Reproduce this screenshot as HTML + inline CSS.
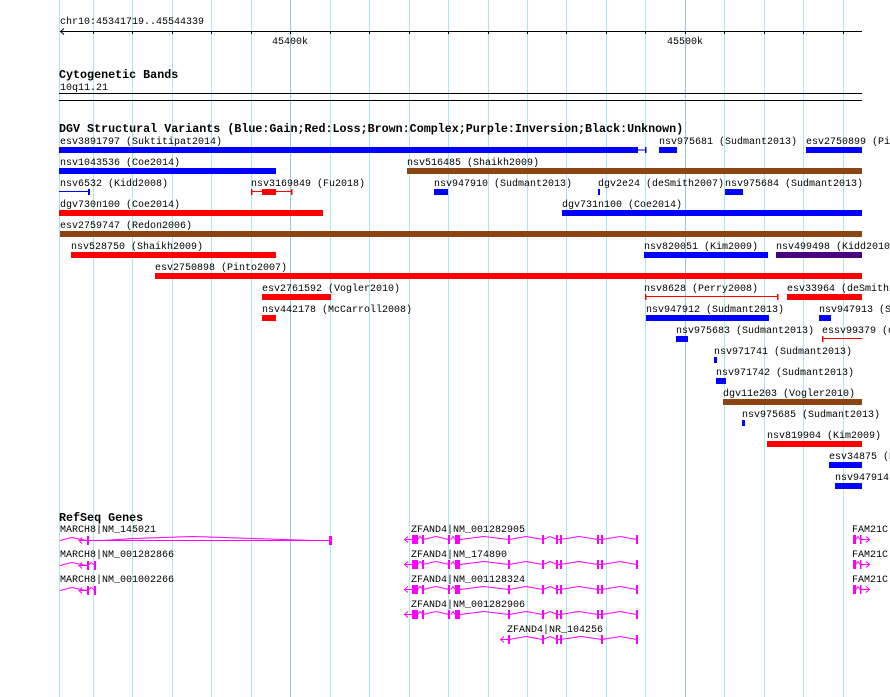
<!DOCTYPE html>
<html><head><meta charset="utf-8"><style>
html,body{margin:0;padding:0;background:#fff;width:890px;height:697px;overflow:hidden}
svg{display:block}
text{font-family:"Liberation Mono",monospace;font-size:10px;fill:#000}
.h{font-weight:bold;font-size:11.7px}
</style></head><body>
<svg width="890" height="697" xmlns="http://www.w3.org/2000/svg">
<g stroke="#a8e6f0" stroke-width="1">
<line x1="59.5" y1="0" x2="59.5" y2="697"/>
<line x1="93.5" y1="0" x2="93.5" y2="697"/>
<line x1="132.5" y1="0" x2="132.5" y2="697"/>
<line x1="172.5" y1="0" x2="172.5" y2="697"/>
<line x1="211.5" y1="0" x2="211.5" y2="697"/>
<line x1="251.5" y1="0" x2="251.5" y2="697"/>
<line x1="330.5" y1="0" x2="330.5" y2="697"/>
<line x1="369.5" y1="0" x2="369.5" y2="697"/>
<line x1="409.5" y1="0" x2="409.5" y2="697"/>
<line x1="448.5" y1="0" x2="448.5" y2="697"/>
<line x1="488.5" y1="0" x2="488.5" y2="697"/>
<line x1="527.5" y1="0" x2="527.5" y2="697"/>
<line x1="566.5" y1="0" x2="566.5" y2="697"/>
<line x1="606.5" y1="0" x2="606.5" y2="697"/>
<line x1="645.5" y1="0" x2="645.5" y2="697"/>
<line x1="724.5" y1="0" x2="724.5" y2="697"/>
<line x1="764.5" y1="0" x2="764.5" y2="697"/>
<line x1="803.5" y1="0" x2="803.5" y2="697"/>
<line x1="843.5" y1="0" x2="843.5" y2="697"/>
</g>
<g stroke="#8cc8e8"><line x1="290.5" y1="0" x2="290.5" y2="697"/><line x1="685.5" y1="0" x2="685.5" y2="697"/></g>

<text x="60" y="24">chr10:45341719..45544339</text>
<g stroke="#000"><line x1="60" y1="31.5" x2="862" y2="31.5"/>
<polyline points="64,28.5 60.5,31.5 64,34.5" fill="none"/>
<path d="M93.5 31v3M132.5 31v3M172.5 31v3M211.5 31v3M251.5 31v3M290.5 31v3M330.5 31v3M369.5 31v3M409.5 31v3M448.5 31v3M488.5 31v3M527.5 31v3M566.5 31v3M606.5 31v3M645.5 31v3M685.5 31v3M724.5 31v3M764.5 31v3M803.5 31v3M843.5 31v3"/></g>
<text x="272" y="44">45400k</text><text x="667" y="44">45500k</text>

<text class="h" x="59" y="78">Cytogenetic Bands</text>
<text x="60" y="90">10q11.21</text>
<rect x="59" y="93" width="803" height="1" fill="#000"/>
<rect x="59" y="100" width="803" height="1" fill="#000"/>

<text class="h" x="59" y="132">DGV Structural Variants (Blue:Gain;Red:Loss;Brown:Complex;Purple:Inversion;Black:Unknown)</text>

<text x="60" y="144">esv3891797 (Suktitipat2014)</text>
<rect x="59" y="147" width="579" height="6" fill="#00f"/><rect x="638" y="149.5" width="8" height="1" fill="#00f"/><rect x="645" y="147" width="1.5" height="6" fill="#00f"/>
<text x="659" y="144">nsv975681 (Sudmant2013)</text><rect x="659" y="147" width="18" height="6" fill="#00f"/>
<text x="806" y="144">esv2750899 (Pi</text><rect x="806" y="147" width="56" height="6" fill="#00f"/>
<text x="60" y="165">nsv1043536 (Coe2014)</text><rect x="59" y="168" width="217" height="6" fill="#00f"/>
<text x="407" y="165">nsv516485 (Shaikh2009)</text><rect x="407" y="168" width="455" height="6" fill="#8b4513"/>
<text x="60" y="186">nsv6532 (Kidd2008)</text><rect x="59" y="191" width="30" height="1" fill="#00f"/><rect x="88" y="189" width="2" height="6" fill="#00f"/>
<text x="251" y="186">nsv3169849 (Fu2018)</text><rect x="251" y="191" width="41" height="1" fill="#f00"/><rect x="251" y="189" width="1.5" height="6" fill="#f00"/><rect x="291" y="189" width="1.5" height="6" fill="#f00"/><rect x="262" y="189" width="14" height="6" fill="#f00"/>
<text x="434" y="186">nsv947910 (Sudmant2013)</text><rect x="434" y="189" width="14" height="6" fill="#00f"/>
<text x="598" y="186">dgv2e24 (deSmith2007)</text><rect x="598" y="189" width="2" height="6" fill="#00f"/>
<text x="725" y="186">nsv975684 (Sudmant2013)</text><rect x="725" y="189" width="18" height="6" fill="#00f"/>
<text x="60" y="207">dgv730n100 (Coe2014)</text><rect x="59" y="210" width="264" height="6" fill="#f00"/>
<text x="562" y="207">dgv731n100 (Coe2014)</text><rect x="562" y="210" width="300" height="6" fill="#00f"/>
<text x="60" y="228">esv2759747 (Redon2006)</text><rect x="60" y="231" width="802" height="6" fill="#8b4513"/>
<text x="71" y="249">nsv528750 (Shaikh2009)</text><rect x="71" y="252" width="205" height="6" fill="#f00"/>
<text x="644" y="249">nsv820051 (Kim2009)</text><rect x="644" y="252" width="124" height="6" fill="#00f"/>
<text x="776" y="249">nsv499498 (Kidd2010</text><rect x="776" y="252" width="86" height="6" fill="#4b0082"/>
<text x="155" y="270">esv2750898 (Pinto2007)</text><rect x="155" y="273" width="707" height="6" fill="#f00"/>
<text x="262" y="291">esv2761592 (Vogler2010)</text><rect x="262" y="294" width="69" height="6" fill="#f00"/>
<text x="644" y="291">nsv8628 (Perry2008)</text><rect x="646" y="296" width="132" height="1" fill="#f00"/><rect x="645" y="294" width="1.5" height="6" fill="#f00"/><rect x="777" y="294" width="1.5" height="6" fill="#f00"/>
<text x="787" y="291">esv33964 (deSmith2</text><rect x="787" y="294" width="75" height="6" fill="#f00"/>
<text x="262" y="312">nsv442178 (McCarroll2008)</text><rect x="262" y="315" width="14" height="6" fill="#f00"/>
<text x="646" y="312">nsv947912 (Sudmant2013)</text><rect x="646" y="315" width="123" height="6" fill="#00f"/>
<text x="819" y="312">nsv947913 (S</text><rect x="819" y="315" width="12" height="6" fill="#00f"/>
<text x="676" y="333">nsv975683 (Sudmant2013)</text><rect x="676" y="336" width="12" height="6" fill="#00f"/>
<text x="822" y="333">essv99379 (d</text><rect x="823" y="338" width="39" height="1" fill="#f00"/><rect x="822" y="336" width="1.5" height="6" fill="#f00"/>
<text x="714" y="354">nsv971741 (Sudmant2013)</text><rect x="714" y="357" width="3" height="6" fill="#00f"/>
<text x="716" y="375">nsv971742 (Sudmant2013)</text><rect x="716" y="378" width="10" height="6" fill="#00f"/>
<text x="723" y="396">dgv11e203 (Vogler2010)</text><rect x="723" y="399" width="139" height="6" fill="#8b4513"/>
<text x="742" y="417">nsv975685 (Sudmant2013)</text><rect x="742" y="420" width="3" height="6" fill="#00f"/>
<text x="767" y="438">nsv819904 (Kim2009)</text><rect x="767" y="441" width="95" height="6" fill="#f00"/>
<text x="829" y="459">esv34875 (D</text><rect x="829" y="462" width="33" height="6" fill="#00f"/>
<text x="835" y="480">nsv947914</text><rect x="835" y="483" width="27" height="6" fill="#00f"/>

<text class="h" x="59" y="521">RefSeq Genes</text>

<g fill="none" stroke="#f0f" stroke-width="1">
<text x="60" y="532" style="fill:#000;stroke:none">MARCH8|NM_145021</text>
<path d="M60 540.5L72 537.5L86 540.5M82 537.5L79 540.5L82 543.5M79 540.5H330M103 540.5L133 538.5L163 537.5L193 536.5L223 537.5L253 538.5L283 539.5L313 540.5"/>
<text x="60" y="557" style="fill:#000;stroke:none">MARCH8|NM_001282866</text>
<path d="M60 565.5L72 562.5L86 565.5M82 562.5L79 565.5L82 568.5M79 565.5H88M88 565.5L91 562.5L95 565.5"/>
<text x="60" y="582" style="fill:#000;stroke:none">MARCH8|NM_001002266</text>
<path d="M60 590.5L72 587.5L86 590.5M82 587.5L79 590.5L82 593.5M79 590.5H88M88 590.5L91 587.5L95 590.5"/>
</g>
<g fill="#f0f">
<rect x="87" y="536" width="2" height="9"/><rect x="329" y="536" width="3" height="9"/>
<rect x="87" y="561" width="2" height="9"/><rect x="94" y="561" width="2" height="9"/>
<rect x="87" y="586" width="2" height="9"/><rect x="94" y="586" width="2" height="9"/>
</g>

<g style="fill:#000">
<text x="411" y="532">ZFAND4|NM_001282905</text>
<text x="411" y="557">ZFAND4|NM_174890</text>
<text x="411" y="582">ZFAND4|NM_001128324</text>
<text x="411" y="607">ZFAND4|NM_001282906</text>
<text x="507" y="632">ZFAND4|NR_104256</text>
</g>
<g id="z1">
<path fill="none" stroke="#f0f" d="M404 539.5H412M408 536.5L404.5 539.5L408 542.5M418 539.5L420 536.5L423 539.5M423 539.5L436 536.5L449 539.5M451 539.5L453 536.5L455 539.5M460 539.5L484 536.5L509 539.5M509 539.5L526 536.5L543 539.5M543 539.5L550 536.5L557 539.5M557 539.5H560M560 539.5L579 536.5L598 539.5M598 539.5H602M602 539.5L620 536.5L637 539.5"/>
<g fill="#f0f"><rect x="412" y="535" width="6" height="9"/><rect x="422" y="535" width="2" height="9"/><rect x="448" y="535" width="2" height="9"/><rect x="455" y="535" width="5" height="9"/><rect x="508" y="535" width="2" height="9"/><rect x="542" y="535" width="2" height="9"/><rect x="556" y="535" width="2" height="9"/><rect x="560" y="535" width="2" height="9"/><rect x="597" y="535" width="2" height="9"/><rect x="601" y="535" width="2" height="9"/><rect x="636" y="535" width="2" height="9"/></g>
</g>
<use href="#z1" y="25"/><use href="#z1" y="50"/><use href="#z1" y="75"/>
<path fill="none" stroke="#f0f" d="M500 639.5H509M504 636.5L500.5 639.5L504 642.5M509 639.5L526 636.5L543 639.5M543 639.5L550 636.5L557 639.5M557 639.5H560M560 639.5L581 636.5L602 639.5M602 639.5L620 636.5L637 639.5"/>
<g fill="#f0f"><rect x="508" y="635" width="2" height="9"/><rect x="542" y="635" width="2" height="9"/><rect x="556" y="635" width="2" height="9"/><rect x="560" y="635" width="2" height="9"/><rect x="601" y="635" width="2" height="9"/><rect x="636" y="635" width="2" height="9"/></g>

<g style="fill:#000"><text x="852" y="532">FAM21C</text><text x="852" y="557">FAM21C</text><text x="852" y="582">FAM21C</text></g>
<g id="f1">
<path fill="none" stroke="#f0f" d="M856 539.5L858 536.5L860 539.5M861 539.5H869M866 536.5L869.5 539.5L866 542.5"/>
<g fill="#f0f"><rect x="853" y="535" width="3" height="9"/><rect x="860" y="535" width="1.5" height="9"/></g>
</g>
<use href="#f1" y="25"/><use href="#f1" y="50"/>
</svg>
</body></html>
